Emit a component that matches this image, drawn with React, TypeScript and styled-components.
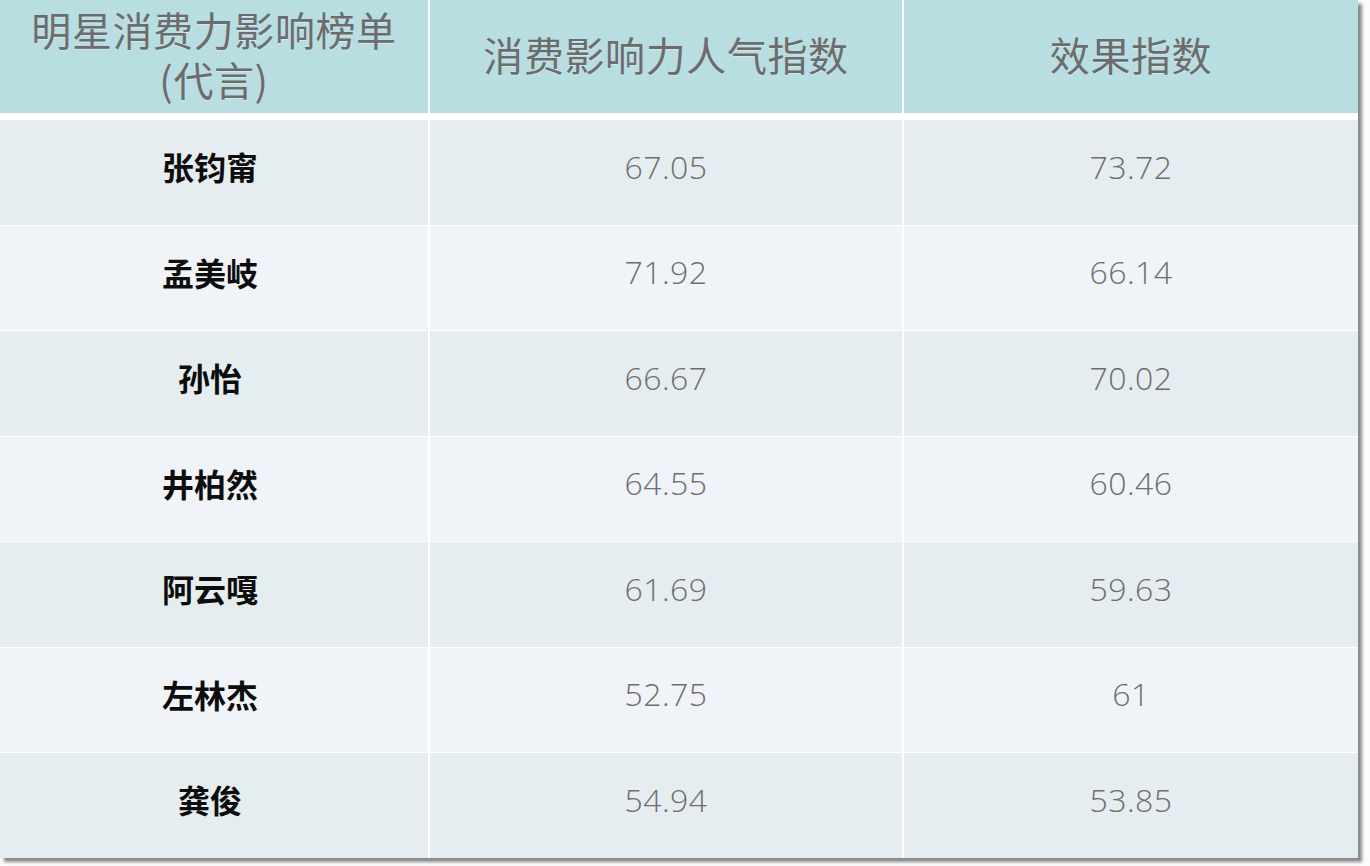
import React from "react";
import styled, { createGlobalStyle } from "styled-components";

type Entry = {
    name: string
    popularity: string
    effect: string
}

const entries: Entry[] = [
    { name: "张钧甯", popularity: "67.05", effect: "73.72" },
    { name: "孟美岐", popularity: "71.92", effect: "66.14" },
    { name: "孙怡", popularity: "66.67", effect: "70.02" },
    { name: "井柏然", popularity: "64.55", effect: "60.46" },
    { name: "阿云嘎", popularity: "61.69", effect: "59.63" },
    { name: "左林杰", popularity: "52.75", effect: "61" },
    { name: "龚俊", popularity: "54.94", effect: "53.85" },
];

const GlobalStyle = createGlobalStyle`
    html, body {
        margin: 0;
        padding: 0;
        background: #fbfcfc;
    }
    body {
        font-family: "Noto Sans", "Noto Sans CJK SC", sans-serif;
    }
`;

const Page = styled.div`
    width: 1370px;
    height: 866px;
    overflow: hidden;
`;

const Table = styled.div`
    width: 1358px;
    display: flex;
    flex-direction: column;
    gap: 7px;
    background: #ffffff;
    box-shadow: 4px 4px 3px rgba(60, 60, 60, 0.6);
`;

const Row = styled.div<{ height: number }>`
    display: grid;
    grid-template-columns: 428px 472px 454px;
    column-gap: 2px;
    height: ${({ height }) => height}px;
`;

const Body = styled.div`
    display: flex;
    flex-direction: column;
    gap: 1px;
`;

const HeaderCell = styled.div`
    display: flex;
    flex-direction: column;
    align-items: center;
    justify-content: center;
    text-align: center;
    background: #b8dee2;
    color: #6c6c6e;
    font-family: "Noto Sans CJK SC", sans-serif;
    font-size: 40px;
    line-height: 50px;
    letter-spacing: 0.6px;
    padding-bottom: 6px;
    text-shadow: 0 1px 0 rgba(255, 255, 255, 0.35);
`;

const HeaderLine = styled.span`
    display: block;
    height: 50px;
`;

const Cell = styled.div<{ shaded: boolean }>`
    display: flex;
    align-items: center;
    justify-content: center;
    padding-bottom: 12px;
    background: ${({ shaded }) => (shaded ? "#e5edf0" : "#f0f3f7")};
`;

const NameCell = styled(Cell)`
    color: #0d0d0d;
    font-family: "Noto Sans CJK SC", sans-serif;
    font-weight: 700;
    font-size: 32px;
    padding-right: 8px;
`;

const NumberCell = styled(Cell)`
    color: #6d6e70;
    font-family: "Open Sans", "Noto Sans", sans-serif;
    font-weight: 300;
    font-size: 32px;
    letter-spacing: 0.5px;
`;

export default function App() {
    return (
        <Page>
            <GlobalStyle />
            <Table>
                <Row height={113}>
                    <HeaderCell>
                        <HeaderLine>明星消费力影响榜单</HeaderLine>
                        <HeaderLine>(代言)</HeaderLine>
                    </HeaderCell>
                    <HeaderCell>消费影响力人气指数</HeaderCell>
                    <HeaderCell>效果指数</HeaderCell>
                </Row>
                <Body>
                    {entries.map((entry, index) => {
                        const shaded = index % 2 === 0;
                        return (
                            <Row key={entry.name} height={104.5}>
                                <NameCell shaded={shaded}>{entry.name}</NameCell>
                                <NumberCell shaded={shaded}>{entry.popularity}</NumberCell>
                                <NumberCell shaded={shaded}>{entry.effect}</NumberCell>
                            </Row>
                        )
                    })}
                </Body>
            </Table>
        </Page>
    );
}
